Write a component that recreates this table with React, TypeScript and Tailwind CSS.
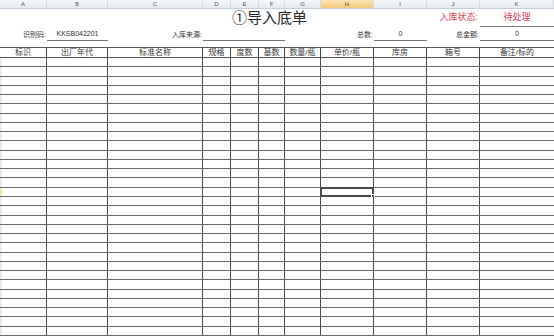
const cols = ["A", "B", "C", "D", "E", "F", "G", "H", "I", "J", "K"];
const heads = ["标识", "出厂年代", "标准名称", "规格", "度数", "基数", "数量/瓶", "单价/瓶", "库房", "箱号", "备注/标的"];
const grid = "grid grid-cols-[47px_61px_95px_28px_28px_26px_36px_53px_53px_53px_74px]";
const rows = Array.from({ length: 30 }, (_, i) => i);

export default function App() {
  return (
    <div
      className="w-[554px] h-[336px] overflow-hidden bg-white flex flex-col text-[#333]"
      style={{ fontFamily: '"Liberation Sans", "Noto Sans CJK SC", sans-serif' }}
    >
      {/* column letters */}
      <div className={`${grid} h-[9px] shrink-0 border-b border-[#c5cfdb]`}>
        {cols.map((c) => (
          <div
            key={c}
            className={
              "flex items-center justify-center text-[6px] leading-none border-r border-[#d5dce6] " +
              (c === "H"
                ? "bg-gradient-to-b from-[#fbe6b4] to-[#f3c777] text-[#5a4a2a]"
                : "bg-gradient-to-b from-[#f6f8fb] to-[#e4e9f0] text-[#555]")
            }
          >
            {c}
          </div>
        ))}
      </div>

      {/* title row */}
      <div className={`${grid} h-[18px] shrink-0 items-end`}>
        <div className="col-start-3 col-span-7 flex justify-center items-end pl-[4px]">
          <span className="text-[15px] leading-[18px] text-[#2a2a2a]">①导入底单</span>
        </div>
        <div className="col-start-10 flex justify-end items-center h-full text-[9px] text-[#e0405a] pr-[2px]">
          入库状态:
        </div>
        <div className="col-start-11 flex justify-center items-center h-full text-[9px] text-[#e0405a] border-b border-[#777]">
          待处理
        </div>
      </div>

      {/* info row */}
      <div className={`${grid} h-[20px] shrink-0 text-[7px] text-[#333]`}>
        <div className="flex items-center justify-end pr-[1px] pt-[2px] h-[14px]">识别码:</div>
        <div className="flex items-center justify-center pt-[2px] h-[14px] border-b border-[#777]">KKSB042201</div>
        <div className="flex items-center justify-end pr-[1px] pt-[2px] h-[14px]">入库来源:</div>
        <div className="col-span-3 h-[14px] border-b border-[#777]" />
        <div />
        <div className="flex items-center justify-end pr-[1px] pt-[2px] h-[14px]">总数:</div>
        <div className="flex items-center justify-center pt-[2px] h-[14px] border-b border-[#777]">0</div>
        <div className="flex items-center justify-end pr-[1px] pt-[2px] h-[14px]">总金额:</div>
        <div className="flex items-center justify-center pt-[2px] h-[14px] border-b border-[#777]">0</div>
      </div>

      {/* table header */}
      <div className={`${grid} h-[11px] shrink-0 border-t border-b border-[#555]`}>
        {heads.map((h, i) => (
          <div
            key={h}
            className={
              "flex items-center justify-center text-[8px] leading-none text-[#3a3a3a] " +
              (i < 10 ? "border-r border-[#444]" : "")
            }
          >
            {h}
          </div>
        ))}
      </div>

      {/* body */}
      <div className="flex-1 grid grid-rows-[repeat(30,minmax(0,1fr))]">
        {rows.map((r) => (
          <div key={r} className={`${grid} border-b border-[#6a6a6a]`}>
            {cols.map((c, i) => (
              <div
                key={c}
                className={
                  "relative " +
                  (i < 10 ? "border-r border-[#4a4a4a] " : "") +
                  (i === 0 ? (r === 14 ? "border-l-2 border-l-[#f6e3a6]" : "border-l-2 border-l-[#e4eaf2]") : "")
                }
              >
                {r === 14 && c === "H" && (
                  <div className="absolute -left-px -top-px -right-px -bottom-px border-2 border-[#4a4a4a]">
                    <div className="absolute -right-[3px] -bottom-[3px] w-[4px] h-[4px] bg-[#4a4a4a] border border-white" />
                  </div>
                )}
              </div>
            ))}
          </div>
        ))}
      </div>
    </div>
  );
}
